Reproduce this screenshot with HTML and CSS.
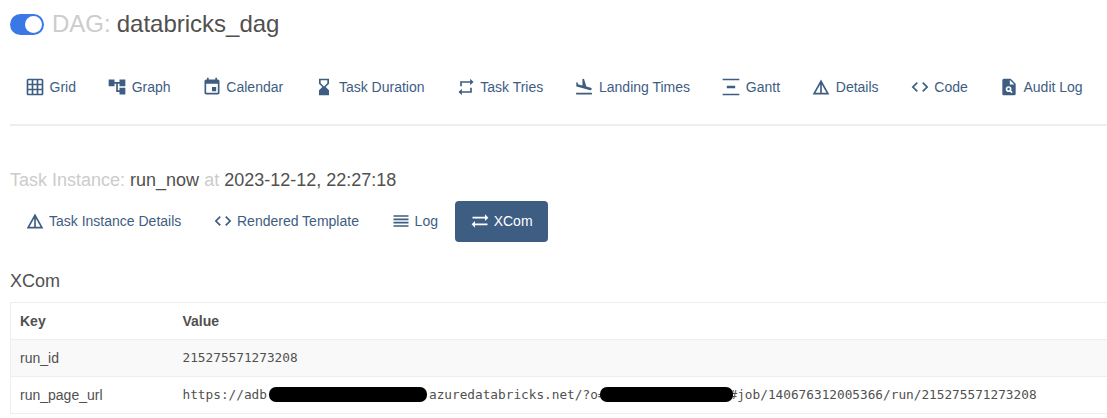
FILE: index.html
```html
<!DOCTYPE html>
<html lang="en">
<head>
    <meta charset="UTF-8">
    <title>databricks_dag - XCom</title>
    <link rel="stylesheet" href="styles.css">
</head>
<body>
    <h4 class="dag-title">
        <span class="switch"><span class="switch-knob"></span></span>
        <span class="muted">DAG:</span>
        <span>databricks_dag</span>
    </h4>

    <ul class="pills dag-nav">
        <li><a href="#"><svg class="icon" viewBox="0 0 24 24"><path d="M20 2H4c-1.1 0-2 .9-2 2v16c0 1.1.9 2 2 2h16c1.1 0 2-.9 2-2V4c0-1.1-.9-2-2-2zM8 20H4v-4h4v4zm0-6H4v-4h4v4zm0-6H4V4h4v4zm6 12h-4v-4h4v4zm0-6h-4v-4h4v4zm0-6h-4V4h4v4zm6 12h-4v-4h4v4zm0-6h-4v-4h4v4zm0-6h-4V4h4v4z"/></svg>Grid</a></li>
        <li><a href="#"><svg class="icon" viewBox="0 0 24 24"><path d="M22 11V3h-7v3H9V3H2v8h7V8h2v10h4v3h7v-8h-7v3h-2V8h2v3z"/></svg>Graph</a></li>
        <li><a href="#"><svg class="icon" viewBox="0 0 24 24"><path d="M17 12h-5v5h5v-5zM16 1v2H8V1H6v2H5c-1.11 0-1.99.9-1.99 2L3 19c0 1.1.89 2 2 2h14c1.1 0 2-.9 2-2V5c0-1.1-.9-2-2-2h-1V1h-2zm3 18H5V8h14v11z"/></svg>Calendar</a></li>
        <li><a href="#"><svg class="icon" viewBox="0 0 24 24"><path d="M18 22l-.01-6L14 12l3.99-4.01L18 2H6v6l4 4-4 3.99V22h12zM8 7.5V4h8v3.5l-4 4-4-4z"/></svg>Task Duration</a></li>
        <li><a href="#"><svg class="icon" viewBox="0 0 24 24"><path d="M7 7h10v3l4-4-4-4v3H5v6h2V7zm10 10H7v-3l-4 4 4 4v-3h12v-6h-2v4z"/></svg>Task Tries</a></li>
        <li><a href="#"><svg class="icon" viewBox="0 0 24 24"><path d="M2.5 19h19v2h-19zm7.18-5.73l4.35 1.16 5.31 1.42c.8.21 1.62-.26 1.84-1.06.21-.8-.26-1.62-1.06-1.84l-5.31-1.42-2.76-9.02L10.12 2v8.28L5.15 8.95l-.93-2.32-1.45-.39v5.17l1.6.43 5.31 1.43z"/></svg>Landing Times</a></li>
        <li><a href="#"><svg class="icon" viewBox="0 0 24 24"><path d="M22 2v2H2V2h20zM7 10.5v3h10v-3H7zM2 20v2h20v-2H2z"/></svg>Gantt</a></li>
        <li><a href="#"><svg class="icon" viewBox="0 0 24 24"><path d="M12 3L2 21h20L12 3zm1 5.92L18.6 19H13V8.92zm-2 0V19H5.4L11 8.92z"/></svg>Details</a></li>
        <li><a href="#"><svg class="icon" viewBox="0 0 24 24"><path d="M9.4 16.6L4.8 12l4.6-4.6L8 6l-6 6 6 6 1.4-1.4zm5.2 0l4.6-4.6-4.6-4.6L16 6l6 6-6 6-1.4-1.4z"/></svg>Code</a></li>
        <li><a href="#"><svg class="icon" viewBox="0 0 24 24"><path d="M14 2H6c-1.1 0-2 .9-2 2v16c0 1.1.9 2 2 2h12c1.1 0 2-.9 2-2V8l-6-6zm1.04 17.45l-1.88-1.88c-1.33.71-3.01.53-4.13-.59-1.37-1.37-1.37-3.58 0-4.95 1.37-1.37 3.58-1.37 4.95 0 1.12 1.12 1.31 2.8.59 4.13l1.88 1.88-1.41 1.41zM13 9V3.5L18.5 9H13z"/><path d="M10.44 13.44c-.59.59-.59 1.54 0 2.12.59.59 1.54.59 2.12 0 .59-.59.59-1.54 0-2.12-.58-.59-1.54-.59-2.12 0z"/></svg>Audit Log</a></li>
    </ul>
    <hr class="rule">

    <h4 class="ti-title">
        <span class="muted">Task Instance:</span> run_now <span class="muted">at</span> 2023-12-12, 22:27:18
    </h4>

    <ul class="pills ti-nav">
        <li><a href="#"><svg class="icon" viewBox="0 0 24 24"><path d="M12 3L2 21h20L12 3zm1 5.92L18.6 19H13V8.92zm-2 0V19H5.4L11 8.92z"/></svg>Task Instance Details</a></li>
        <li><a href="#"><svg class="icon" viewBox="0 0 24 24"><path d="M9.4 16.6L4.8 12l4.6-4.6L8 6l-6 6 6 6 1.4-1.4zm5.2 0l4.6-4.6-4.6-4.6L16 6l6 6-6 6-1.4-1.4z"/></svg>Rendered Template</a></li>
        <li><a href="#"><svg class="icon" viewBox="0 0 24 24"><path d="M3 15h18v-2H3v2zm0 4h18v-2H3v2zm0-8h18V9H3v2zm0-6v2h18V5H3z"/></svg>Log</a></li>
        <li class="active"><a href="#"><svg class="icon" viewBox="0 0 24 24"><path d="M22 8l-4-4v3H3v2h15v3l4-4zM2 16l4 4v-3h15v-2H6v-3l-4 4z"/></svg>XCom</a></li>
    </ul>

    <h4 class="section-title">XCom</h4>

    <table class="table">
        <thead>
            <tr>
                <th class="col-key">Key</th>
                <th>Value</th>
            </tr>
        </thead>
        <tbody>
            <tr>
                <td>run_id</td>
                <td><pre class="value">215275571273208</pre></td>
            </tr>
            <tr>
                <td>run_page_url</td>
                <td><pre class="value">https://adb<span class="redact redact-host"></span>azuredatabricks.net/?o=<span class="redact redact-org"></span>#job/140676312005366/run/215275571273208</pre></td>
            </tr>
        </tbody>
    </table>
</body>
</html>
```

FILE: styles.css
```css
html, body {
    overflow: hidden;
}
body {
    margin: 0;
    padding: 0 0 0 10px;
    font-family: 'Liberation Sans', Arial, sans-serif;
    font-size: 14px;
    line-height: 20px;
    color: #51504f;
    background: white;
}
h4 {
    margin: 0;
    font-weight: 400;
}
.muted {
    color: #ccc;
}
.dag-title {
    display: flex;
    align-items: center;
    gap: 8px;
    height: 26px;
    padding-top: 11px;
    font-size: 24px;
    line-height: 26px;
}
.dag-title .muted {
    margin-right: -2px;
}
.switch {
    width: 34px;
    height: 21px;
    padding: 2px;
    box-sizing: border-box;
    display: flex;
    justify-content: flex-end;
    background: #3b78e7;
    border-radius: 11px;
}
.switch-knob {
    width: 17px;
    height: 17px;
    background: white;
    border-radius: 50%;
}
.pills {
    display: flex;
    margin: 0;
    padding: 0;
    list-style: none;
}
.pills a {
    display: flex;
    align-items: center;
    gap: 4px;
    height: 41px;
    padding: 0 15px;
    box-sizing: border-box;
    color: #3e5d82;
    text-decoration: none;
    border-radius: 4px;
}
.icon {
    width: 20px;
    height: 20px;
    fill: currentColor;
    flex: none;
}
.pills .active a {
    color: white;
    background: #3e5d82;
}
.dag-nav {
    gap: 1.24px;
    margin-top: 29px;
}
.dag-nav a {
    gap: 4.5px;
}
.rule {
    height: 2px;
    margin: 17px 0 0;
    border: 0;
    background: #eee;
}
.ti-title {
    margin-top: 44px;
    font-size: 18px;
    line-height: 20px;
}
.ti-nav {
    gap: 1.7px;
    margin-top: 11px;
}
.ti-nav a {
    padding-bottom: 1px;
}
.section-title {
    margin-top: 29px;
    font-size: 18px;
    line-height: 20px;
}
.table {
    width: calc(100% + 10px);
    margin-top: 11px;
    border-collapse: collapse;
    border: 1px solid #eee;
    line-height: 20px;
}
.table th, .table td {
    height: 37px;
    padding: 0 9px;
    box-sizing: border-box;
    text-align: left;
    border-top: 1px solid #eee;
}
.col-key {
    width: 163px;
}
.table tbody tr:first-child {
    background: #f9f9f9;
}
.value {
    margin: 0;
    font-family: 'DejaVu Sans Mono', 'Liberation Mono', monospace;
    font-size: 12.75px;
    line-height: 20px;
}
.redact {
    display: inline-block;
    position: relative;
    height: 15px;
    vertical-align: -3px;
    background: black;
    border-radius: 7px;
}
.redact-host {
    width: 158px;
    margin: 0 2px;
}
.redact-org {
    width: 133px;
    margin: 0 -3px 0 -6px;
}
```
